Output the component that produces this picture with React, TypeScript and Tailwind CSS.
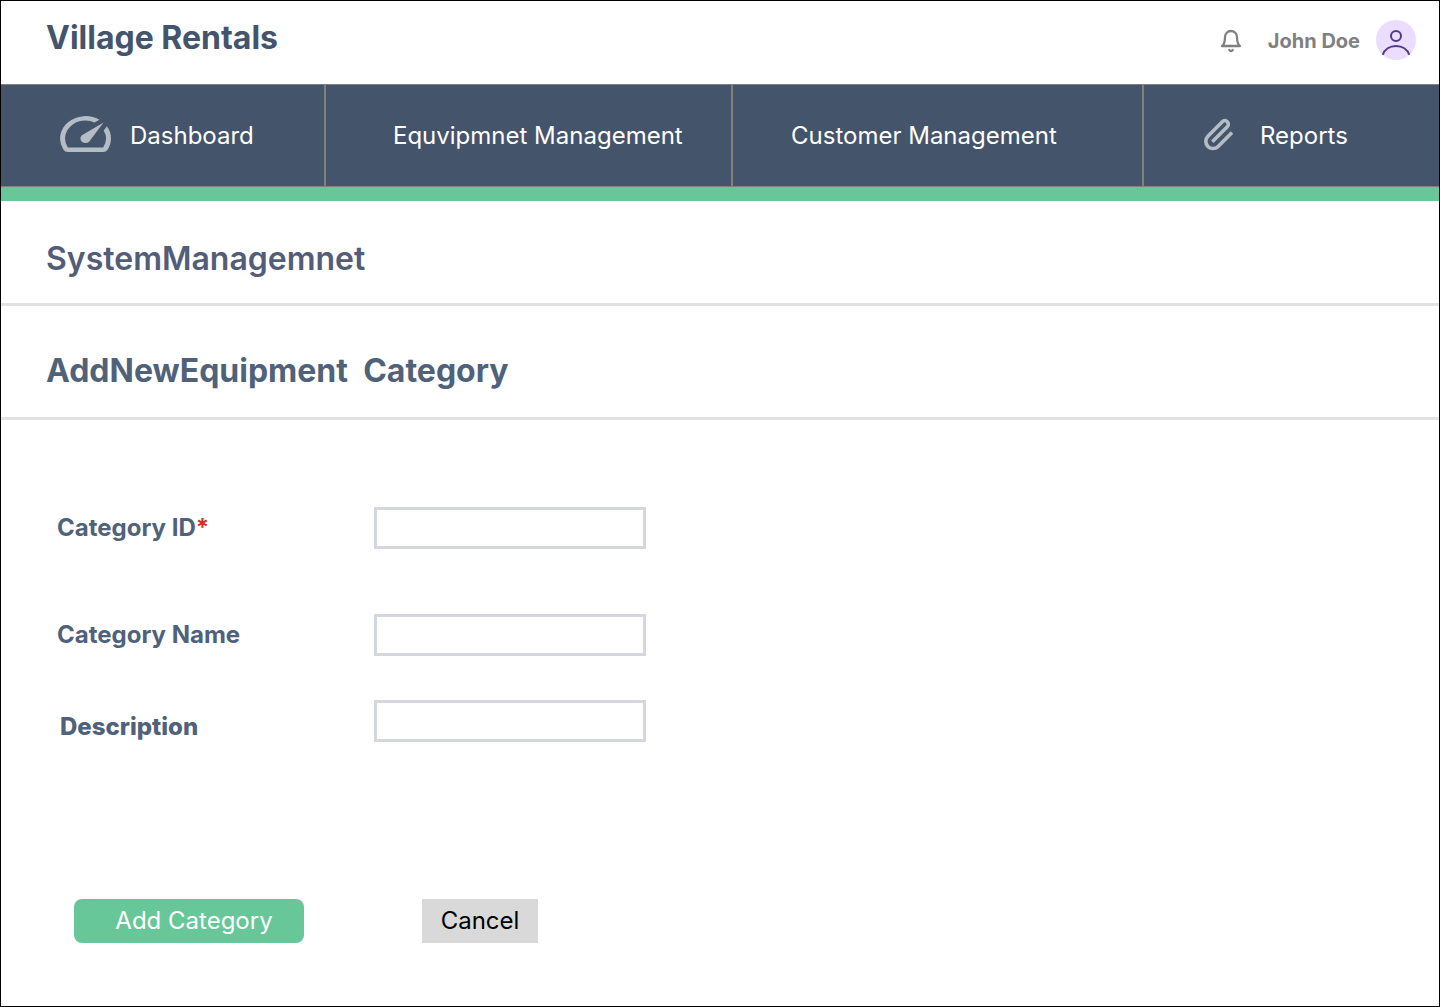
import type { ReactNode } from "react";
import { FiBell } from "react-icons/fi";

function GaugeIcon() {
  return (
    <svg
      viewBox="2 4 20 16"
      preserveAspectRatio="none"
      className="mb-1 h-9 w-[51px] shrink-0 fill-[#b4bcc5]"
      aria-hidden="true"
    >
      <path d="M20.38 8.57l-1.23 1.85a8 8 0 0 1-.22 7.58H5.07A8 8 0 0 1 15.58 6.85l1.85-1.23A10 10 0 0 0 3.35 19a2 2 0 0 0 1.72 1h13.85a2 2 0 0 0 1.74-1 10 10 0 0 0-.27-10.44z" />
      <path d="M10.59 15.41a2 2 0 0 0 2.83 0l5.66-8.49-8.49 5.66a2 2 0 0 0 0 2.83z" />
    </svg>
  );
}

function ClipIcon() {
  return (
    <svg viewBox="0 0 40 40" className="mb-0.5 size-10 shrink-0" aria-hidden="true">
      <path
        d="M33 17.5L19.1 31.4A7.2 7.2 0 0 1 8.9 21.2L23.3 6.7A3.5 3.5 0 0 1 28.3 11.7L13.3 26.7"
        fill="none"
        stroke="#b4bcc5"
        strokeWidth="3.6"
      />
    </svg>
  );
}

function Avatar() {
  return (
    <svg viewBox="0 0 40 40" className="size-10" aria-hidden="true">
      <circle cx="20" cy="20" r="20" fill="#eaddff" />
      <g fill="none" stroke="#4f378a" strokeWidth="2">
        <circle cx="20" cy="16" r="5" />
        <path d="M6.8 34.8C8.6 29.4 13.8 26 20 26s11.4 3.4 13.2 8.8" />
      </g>
    </svg>
  );
}

function NavLink({ className, children }: { className: string; children: ReactNode }) {
  return (
    <a href="#" className={`flex items-center border-[#808080] text-2xl font-normal text-white ${className}`}>
      {children}
    </a>
  );
}

function Field({ id, label, required, className }: { id: string; label: string; required?: boolean; className: string }) {
  return (
    <div className="flex items-center">
      <label htmlFor={id} className={`w-[317px] shrink-0 text-2xl text-[#4f627a] ${className}`}>
        {label}
        {required && <span className="text-[#d92d2d]">*</span>}
      </label>
      <input id={id} type="text" required={required} className="h-[42px] w-[272px] border-3 border-[#d4d7dd] bg-white px-2 text-lg" />
    </div>
  );
}

export default function App() {
  return (
    <div className="min-h-screen border border-black bg-white font-['Inter',sans-serif]">
      <header className="flex h-[83px] items-start justify-between pr-[23px] pl-[45px]">
        <h1 className="pt-[17px] text-[32px] leading-10 font-bold text-[#44546c]">Village Rentals</h1>
        <div className="flex items-center pt-[19px]">
          <button type="button" aria-label="Notifications" className="mr-[25px] pt-0.5 text-[#808080]">
            <FiBell className="size-6 stroke-[2.3]" />
          </button>
          <span className="mr-4 pt-0.5 text-xl font-bold text-[#808080]">John Doe</span>
          <Avatar />
        </div>
      </header>

      <nav className="grid h-[103px] grid-cols-[325fr_407fr_411fr_295fr] border-y border-[#808080] bg-[#44546b]">
        <NavLink className="gap-[19px] border-r-2 pl-[59px]">
          <GaugeIcon />
          Dashboard
        </NavLink>
        <NavLink className="border-r-2 pl-[67px]">Equvipmnet Management</NavLink>
        <NavLink className="border-r-2 pl-[58px]">Customer Management</NavLink>
        <NavLink className="gap-[21px] pl-[55px]">
          <ClipIcon />
          Reports
        </NavLink>
      </nav>
      <div className="h-3.5 bg-[#68c799]" />

      <main>
        <h2 className="border-b-3 border-[#e2e2e2] pt-[38px] pb-6 pl-[45px] text-[32px] leading-10 font-semibold text-[#535d78]">
          SystemManagemnet
        </h2>
        <h3 className="border-b-3 border-[#e2e2e2] pt-[45px] pb-[26px] pl-[45px] text-[32px] leading-10 font-bold whitespace-pre text-[#4f627a]">
          {"AddNewEquipment  Category"}
        </h3>

        <form className="pt-[87px] pb-12 pl-14" onSubmit={(e) => e.preventDefault()}>
          <Field id="category-id" label="Category ID" required className="font-bold" />
          <div className="mt-[65px]">
            <Field id="category-name" label="Category Name" className="font-bold" />
          </div>
          <div className="mt-[43px]">
            <Field id="description" label="Description" className="pt-3 pl-[3px] font-extrabold" />
          </div>
          <div className="mt-[156px] flex items-center gap-[118px] pl-[17px] text-2xl">
            <button type="submit" className="h-11 w-[230px] rounded-lg bg-[#68c799] pl-2.5 font-normal text-white">
              Add Category
            </button>
            <button type="button" className="h-11 w-[116px] bg-[#d9d9d9] text-black">
              Cancel
            </button>
          </div>
        </form>
      </main>
    </div>
  );
}
